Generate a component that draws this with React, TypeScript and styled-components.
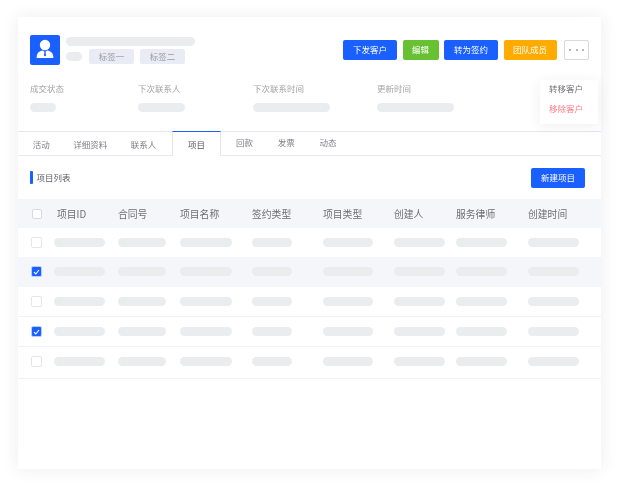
import React from "react";
import styled, { createGlobalStyle } from "styled-components";

const Global = createGlobalStyle`
  html, body { margin: 0; padding: 0; background: #fff; }
  body { font-family: "Noto Sans CJK SC", "Noto Sans", sans-serif; }
  * { box-sizing: border-box; }
`;
const Page = styled.div`
  width: 623px; height: 489px; padding: 17px 22px 20px 18px; overflow: hidden;
  filter: blur(0.3px);
`;
const Card = styled.main`
  position: relative; height: 452px; background: #fff;
  box-shadow: 0 0 16px rgba(40, 50, 80, 0.09);
`;
const Header = styled.header`
  display: flex; align-items: center; height: 47px; padding: 18px 12px 0;
`;
const Avatar = styled.div`
  width: 30px; height: 30px; border-radius: 2px; background: #1a5fff; flex: none;
  display: flex; align-items: center; justify-content: center;
  svg { display: block; }
`;
const Identity = styled.div`
  display: flex; flex-direction: column; gap: 3px; margin-left: 6px; flex: 1; padding-top: 1px;
`;
const Skeleton = styled.span<{ $w: number }>`
  display: block; width: ${p => p.$w}px; height: 9px; border-radius: 5px; background: #ebecee; flex: none;
`;
const TagRow = styled.div`
  display: flex; align-items: center; gap: 6px;
  & > :first-child { margin-right: 1px; }
`;
const Tag = styled.span`
  width: 45px; height: 15px; border-radius: 2px; background: #e9ecf5; color: #9a9ca6;
  font-size: 8.5px; line-height: 15px; text-align: center;
`;
const Actions = styled.div`display: flex; align-items: center; gap: 5.5px; margin-top: 1px;`;
const Btn = styled.button<{ $bg: string; $w: number }>`
  width: ${p => p.$w}px; height: 20px; padding: 0 0 2px; border: 0; border-radius: 2px;
  background: ${p => p.$bg}; color: #fff; font: 8.5px/18px "Noto Sans CJK SC", sans-serif; text-align: center;
`;
const More = styled.button`
  width: 25px; height: 20px; margin-left: 2px; padding: 0; background: #fff; border: 1px solid #d6d8e2; border-radius: 2px;
  display: flex; align-items: center; justify-content: center; gap: 4.5px;
  i { width: 2px; height: 2px; border-radius: 50%; background: #9a9ca6; display: block; }
`;
const InfoRow = styled.section`
  display: grid; grid-template-columns: 108px 115px 124px 1fr; height: 67px; padding: 19px 0 0 12px;
`;
const InfoCol = styled.div`display: flex; flex-direction: column; gap: 9px;`;
const InfoLabel = styled.span`font-size: 8.5px; line-height: 11px; color: #a3a3a6;`;
const Menu = styled.div`
  position: absolute; left: 522px; top: 63px; width: 58px; height: 44px; padding: 2px 0 0 9px; background: #fff;
  box-shadow: 0 2px 12px rgba(40, 50, 80, 0.08);
  display: flex; flex-direction: column; gap: 8px;
`;
const MenuItem = styled.span<{ $danger?: boolean }>`
  font-size: 8.5px; line-height: 12px; color: ${p => (p.$danger ? "#ff7a85" : "#6f7075")};
`;
const Tabs = styled.nav`
  display: flex; align-items: stretch; height: 25px; padding-left: 3px;
  border-top: 1px solid #e6e7ee; border-bottom: 1px solid #e9eaf0;
`;
const Tab = styled.span<{ $low?: boolean }>`
  font-size: 8.5px; line-height: 12px; color: #7d7e84;
  padding: ${p => (p.$low ? "6px 11.75px 0" : "4px 12.4px 0")};
`;
const ActiveTab = styled.span`
  font-size: 8.5px; line-height: 12px; color: #55565c;
  width: 49px; height: 25px; margin: -1px 2.5px 0 4px; padding-top: 6px; text-align: center; background: #fff;
  border: 1px solid #e6e7ee; border-top: 1.5px solid #1a5fff; border-bottom: 0;
`;
const SectionHead = styled.div`
  display: flex; align-items: center; justify-content: space-between; height: 43px; padding: 0 16px 0 12px;
`;
const SectionTitle = styled.h2`
  margin: 0; display: flex; align-items: center; gap: 4px; font-size: 8.5px; font-weight: 400; color: #5f6066; line-height: 13px;
  &::before { content: ""; width: 2.5px; height: 13px; border-radius: 1px; background: #1a5fff; }
`;
const Table = styled.div`display: flex; flex-direction: column;`;
const dataColumns = "64px 62px 72px 71px 71px 62px 72px 1fr";
const HeadRow = styled.div`
  display: grid; grid-template-columns: 22px ${dataColumns}; align-items: center; height: 29px; padding-left: 14px; background: #f5f6fa;
  & > :first-child { border-color: #d9dae1; }
`;
const HeadCell = styled.span<{ $first?: boolean }>`
  font-size: 9.8px; color: #6d6e74; line-height: 14px; padding-left: ${p => (p.$first ? "3px" : "0")};
`;
const Row = styled.div<{ $selected?: boolean }>`
  display: grid; grid-template-columns: 23px ${dataColumns}; align-items: center; height: 30px; padding-left: 13px;
  background: ${p => (p.$selected ? "#f5f6fa" : "#fff")};
  border-bottom: 1px solid ${p => (p.$selected ? "#f5f6fa" : "#f2f3f7")};
  &:nth-child(2) { height: 29px; border-bottom: 0; }
  &:last-child { height: 32px; padding-bottom: 2px; }
`;
const Check = styled.span<{ $on?: boolean; $size?: number }>`
  width: ${p => p.$size ?? 11}px; height: ${p => p.$size ?? 11}px; border-radius: 2px; display: flex; align-items: center; justify-content: center;
  background: ${p => (p.$on ? "#1a5fff" : "#fff")};
  border: 1px solid ${p => (p.$on ? "#b8ccff" : "#e4e5ea")};
`;

const widths = [51, 48, 52, 40, 50, 51, 51, 51];
const heads = ["项目ID", "合同号", "项目名称", "签约类型", "项目类型", "创建人", "服务律师", "创建时间"];
const rows = [false, true, false, true, false];

const Person = () => (
  <svg width="22" height="24" viewBox="0 0 22 24" fill="none">
    <circle cx="11" cy="7" r="5.2" fill="#fff" />
    <path d="M3.6 15.5c1-1.7 3.2-2.6 5.2-2.9L11 14l2.2-1.4c2 .3 4.2 1.2 5.2 2.9.8 1.5 1 3 1 4.5H2.6c0-1.5.2-3 1-4.5Z" fill="#fff" />
    <path d="M10.1 13.6h1.8l-.3 1.5.6 2.2L11 18.6l-1.2-1.3.6-2.2-.3-1.5Z" fill="#1a5fff" />
  </svg>
);

export default function App() {
  return (
    <Page>
      <Global />
      <Card>
        <Header>
          <Avatar><Person /></Avatar>
          <Identity>
            <Skeleton $w={129} />
            <TagRow>
              <Skeleton $w={16} />
              <Tag>标签一</Tag>
              <Tag>标签二</Tag>
            </TagRow>
          </Identity>
          <Actions>
            <Btn $bg="#1a5fff" $w={54}>下发客户</Btn>
            <Btn $bg="#67c132" $w={36}>编辑</Btn>
            <Btn $bg="#1a5fff" $w={54}>转为签约</Btn>
            <Btn $bg="#ffab00" $w={53}>团队成员</Btn>
            <More><i /><i /><i /></More>
          </Actions>
        </Header>
        <InfoRow>
          <InfoCol><InfoLabel>成交状态</InfoLabel><Skeleton $w={26} /></InfoCol>
          <InfoCol><InfoLabel>下次联系人</InfoLabel><Skeleton $w={47} /></InfoCol>
          <InfoCol><InfoLabel>下次联系时间</InfoLabel><Skeleton $w={77} /></InfoCol>
          <InfoCol><InfoLabel>更新时间</InfoLabel><Skeleton $w={77} /></InfoCol>
        </InfoRow>
        <Menu>
          <MenuItem>转移客户</MenuItem>
          <MenuItem $danger>移除客户</MenuItem>
        </Menu>
        <Tabs>
          <Tab $low>活动</Tab>
          <Tab $low>详细资料</Tab>
          <Tab $low>联系人</Tab>
          <ActiveTab>项目</ActiveTab>
          <Tab>回款</Tab>
          <Tab>发票</Tab>
          <Tab>动态</Tab>
        </Tabs>
        <SectionHead>
          <SectionTitle>项目列表</SectionTitle>
          <Btn $bg="#1a5fff" $w={54}>新建项目</Btn>
        </SectionHead>
        <Table>
          <HeadRow>
            <Check $size={10} />
            {heads.map((h, i) => <HeadCell key={h} $first={i === 0}>{h}</HeadCell>)}
          </HeadRow>
          {rows.map((on, i) => (
            <Row key={i} $selected={i === 1}>
              <Check $on={on}>
                {on && (
                  <svg width="7" height="6" viewBox="0 0 7 6" fill="none">
                    <path d="M1 3.2 2.8 5 6 1" stroke="#fff" strokeWidth="1.1" />
                  </svg>
                )}
              </Check>
              {widths.map((w, j) => <Skeleton key={j} $w={w} />)}
            </Row>
          ))}
        </Table>
      </Card>
    </Page>
  );
}
